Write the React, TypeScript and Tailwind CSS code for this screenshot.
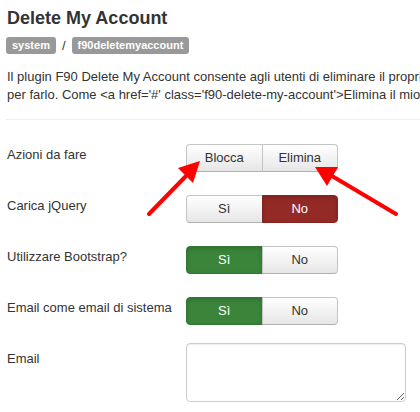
import React from "react";

type Opt = { label: string; active?: "green" | "red" };

function Toggle({ options }: { options: Opt[] }) {
  return (
    <div className="flex w-[152px] h-[28px]">
      {options.map((o, i) => {
        const first = i === 0;
        const last = i === options.length - 1;
        const base =
          "flex-1 flex items-center justify-center text-[13px] border " +
          (first ? "rounded-l-[4px] " : "-ml-px ") +
          (last ? "rounded-r-[4px] " : "");
        if (o.active === "green") {
          return (
            <div
              key={i}
              className={base + "bg-[#3a853a] border-[#337533] text-white shadow-[inset_0_2px_4px_rgba(0,0,0,0.15)]"}
            >
              {o.label}
            </div>
          );
        }
        if (o.active === "red") {
          return (
            <div
              key={i}
              className={base + "bg-[#942a25] border-[#822420] text-white shadow-[inset_0_2px_4px_rgba(0,0,0,0.15)]"}
            >
              {o.label}
            </div>
          );
        }
        return (
          <div
            key={i}
            className={base + "bg-gradient-to-b from-white to-[#e6e6e6] border-[#c4c4c4] border-b-[#b0b0b0] text-[#333]"}
          >
            {o.label}
          </div>
        );
      })}
    </div>
  );
}

function Row({ label, children }: { label: string; children: React.ReactNode }) {
  return (
    <div className="flex h-[51px]">
      <div className="w-[179px] pt-[2px] text-[13px] leading-[18px] text-[#333] whitespace-nowrap">{label}</div>
      <div>{children}</div>
    </div>
  );
}

export default function App() {
  return (
    <div
      className="relative w-[420px] h-[412px] overflow-hidden bg-white text-[#333]"
      style={{ fontFamily: '"Liberation Sans", Arial, sans-serif' }}
    >
      <div className="pl-[7px] pt-[7px]">
        <h1 className="text-[18px] font-bold leading-[22px] text-[#333]">Delete My Account</h1>
        <div className="flex items-center gap-[6px] mt-[8px] -ml-px">
          <span className="bg-[#999] text-white text-[11px] font-bold leading-[17px] px-[6px] rounded-[3px]">system</span>
          <span className="text-[13px] leading-[17px]">/</span>
          <span className="bg-[#999] text-white text-[11px] font-bold leading-[17px] px-[6px] rounded-[3px]">f90deletemyaccount</span>
        </div>
        <div className="mt-[14px] text-[13px] leading-[18px] whitespace-nowrap">
          <p>Il plugin F90 Delete My Account consente agli utenti di eliminare il proprio account dal sito in modo semplice e veloce.</p>
          <p>per farlo. Come &lt;a href='#' class='f90-delete-my-account'&gt;Elimina il mio account&lt;/a&gt;</p>
        </div>
      </div>
      <div className="ml-[6px] mt-[15px] border-t border-[#eee]" />
      <div className="pl-[7px] pt-[24px]">
        <Row label="Azioni da fare">
          <Toggle options={[{ label: "Blocca" }, { label: "Elimina" }]} />
        </Row>
        <Row label="Carica jQuery">
          <Toggle options={[{ label: "Sì" }, { label: "No", active: "red" }]} />
        </Row>
        <Row label="Utilizzare Bootstrap?">
          <Toggle options={[{ label: "Sì", active: "green" }, { label: "No" }]} />
        </Row>
        <Row label="Email come email di sistema">
          <Toggle options={[{ label: "Sì", active: "green" }, { label: "No" }]} />
        </Row>
        <div className="flex">
          <div className="w-[179px] pt-[2px] text-[13px] leading-[18px]">Email</div>
          <textarea className="-mt-[5px] w-[220px] h-[59px] border border-[#ccc] rounded-[4px] shadow-[inset_0_1px_1px_rgba(0,0,0,0.075)] bg-white" />
        </div>
      </div>
      <svg className="absolute inset-0 pointer-events-none" width="420" height="412" viewBox="0 0 420 412">
        <g stroke="#ff0000" strokeWidth="4" strokeLinecap="round" fill="#ff0000">
          <line x1="149" y1="214" x2="186" y2="176" />
          <line x1="396" y1="214" x2="332" y2="176" />
        </g>
        <polygon points="200,161 178,168 193,183" fill="#ff0000" />
        <polygon points="315,167 327,186 338,167" fill="#ff0000" />
      </svg>
    </div>
  );
}
